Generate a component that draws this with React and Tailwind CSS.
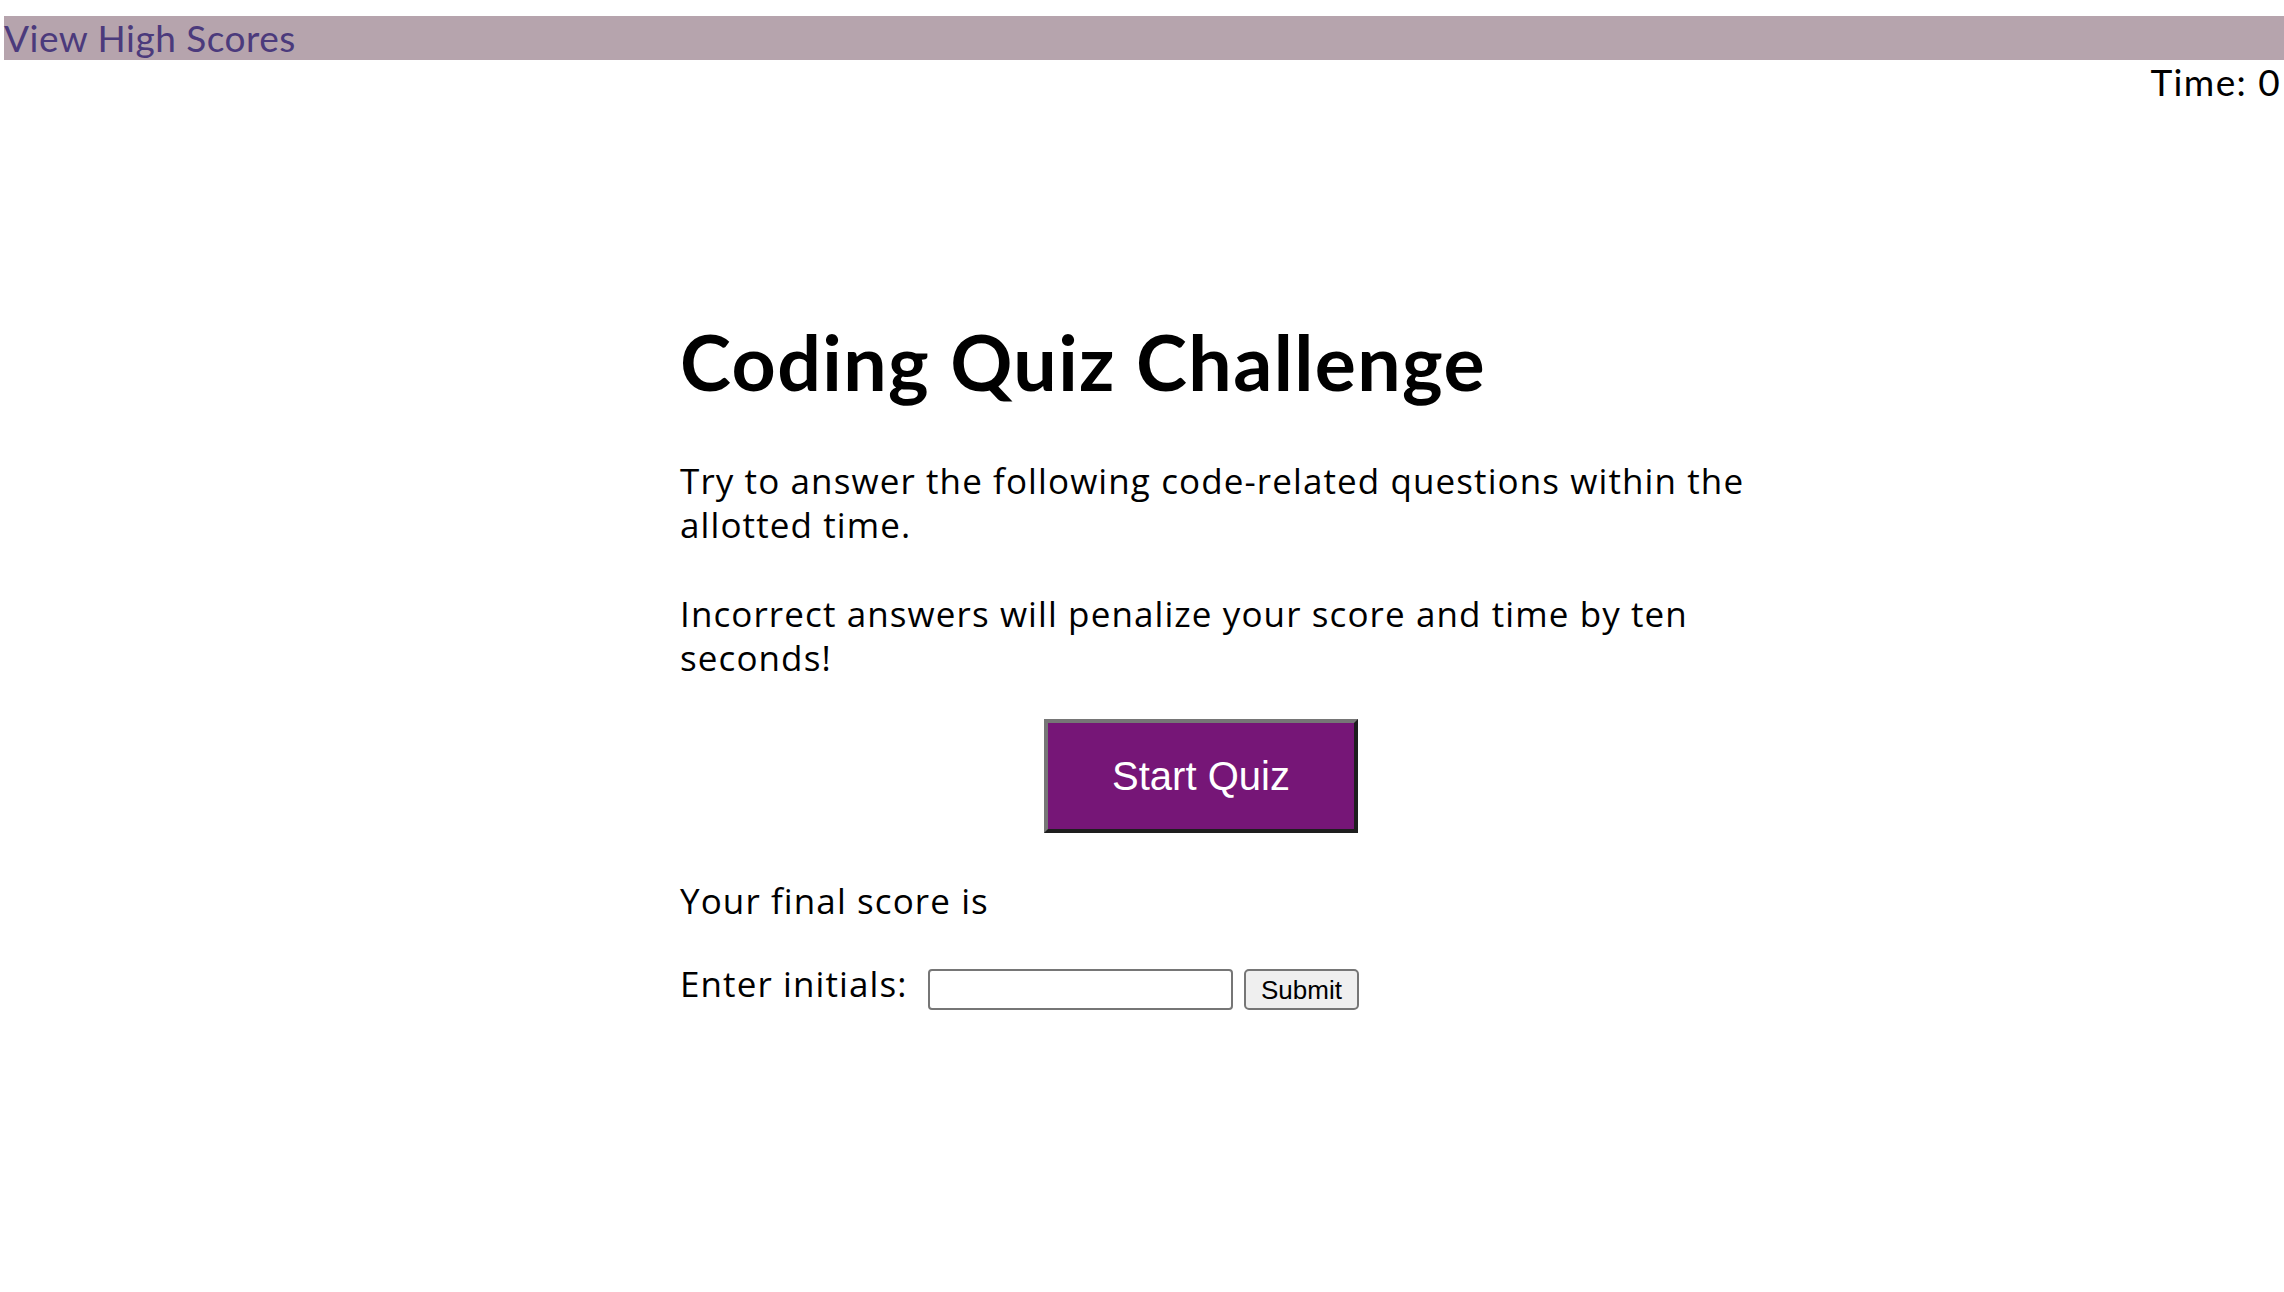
export default function App() {
  return (
    <div className="min-h-[1292px] bg-white text-black font-['Lato',sans-serif]">
      <div className="pt-[16px] pl-[4px]">
        <div className="h-[44px] bg-[#b6a4ad] flex items-center">
          <a className="text-[37px] leading-[44px] tracking-[0.5px] text-[#4b3a7c] cursor-pointer">View High Scores</a>
        </div>
      </div>
      <div className="text-right text-[37px] leading-[44px] tracking-[1.4px] pr-[3px]">Time: 0</div>
      <main className="ml-[680px] w-[1105px]">
        <h1 className="mt-[219px] text-[77px] leading-[76px] font-bold tracking-[1.4px]">Coding Quiz Challenge</h1>
        <p className="mt-[60px] text-[35px] leading-[44px] tracking-[1.1px] font-['Open_Sans',sans-serif]">
          Try to answer the following code-related questions within the allotted time.
        </p>
        <p className="mt-[45px] text-[35px] leading-[44px] tracking-[1.1px] font-['Open_Sans',sans-serif]">
          Incorrect answers will penalize your score and time by ten seconds!
        </p>
        <button className="mt-[39px] ml-[364px] w-[314px] h-[114px] bg-[#761677] text-white text-[40px] font-['Liberation_Sans',Arial,sans-serif] border-[4px] border-t-[#767676] border-l-[#767676] border-b-[#1e1e1e] border-r-[#1e1e1e] block">
          Start Quiz
        </button>
        <p className="mt-[46px] text-[35px] leading-[44px] tracking-[1.1px] font-['Open_Sans',sans-serif]">Your final score is</p>
        <div className="mt-[39px] flex items-start">
          <label className="w-[248px] text-[35px] leading-[44px] tracking-[1.1px] shrink-0 font-['Open_Sans',sans-serif]">Enter initials:</label>
          <input type="text" className="mt-[7px] w-[305px] h-[41px] border-2 border-[#767676] rounded-[4px] bg-white" />
          <button className="mt-[7px] ml-[11px] w-[115px] h-[41px] bg-[#efefef] border-2 border-[#767676] rounded-[5px] text-[26px] font-['Liberation_Sans',Arial,sans-serif] leading-none">
            Submit
          </button>
        </div>
      </main>
    </div>
  );
}
